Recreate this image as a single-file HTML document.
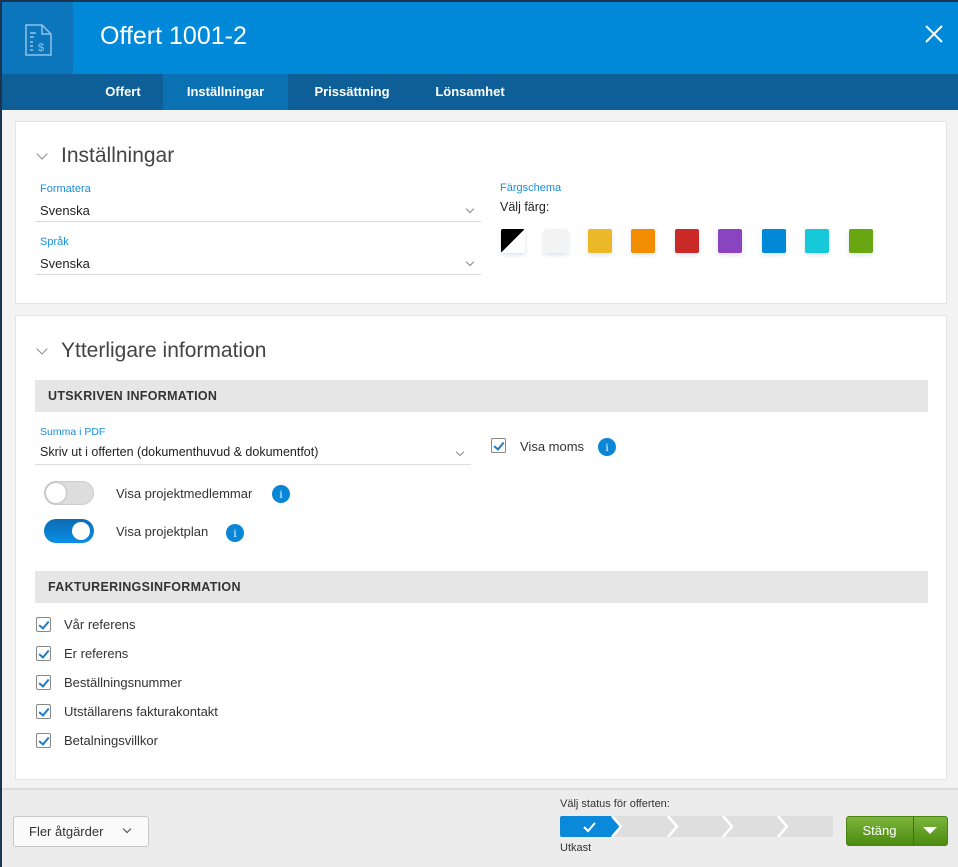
<!DOCTYPE html>
<html><head><meta charset="utf-8"><style>
*{box-sizing:border-box;margin:0;padding:0}
body{width:958px;height:867px;overflow:hidden;font-family:"Liberation Sans",sans-serif;background:#1a3550;position:relative;color:#333}
.m{position:absolute;left:2px;top:2px;right:0;bottom:0;background:#f3f3f3}
.hd{position:absolute;left:0;top:0;right:0;height:72px;background:#0089d9}
.ic{position:absolute;left:0;top:0;width:71px;height:72px;background:#0b76bb}
.tt{position:absolute;left:98px;top:20px;color:#fff;font-size:25px}
.x{position:absolute;right:14px;top:22px}
.tb{position:absolute;left:0;top:72px;right:0;height:36px;background:#0e5f98}
.tb span{position:absolute;top:0;height:36px;line-height:36px;color:#fff;font-size:13px;font-weight:bold;text-align:center}
.card{position:absolute;left:13px;right:11px;background:#fff;border:1px solid #e4e4e4}
.h2{position:absolute;font-size:21px;color:#444}
.chev{position:absolute;width:8px;height:8px;border-right:1.3px solid #888;border-bottom:1.3px solid #888;transform:rotate(45deg)}
.lbl{position:absolute;font-size:11px;color:#1a8fd8}
.val{position:absolute;font-size:13px;color:#222}
.ln{position:absolute;height:1px;background:#ddd}
.sw{position:absolute;top:227px;width:24px;height:24px;border-radius:2px;box-shadow:0 2px 5px rgba(0,60,140,.15)}
.bar{position:absolute;left:33px;width:893px;height:32px;background:#e6e6e6;font-size:12.5px;font-weight:bold;color:#333;line-height:32px;padding-left:13px;letter-spacing:.3px}
.cb{position:absolute;width:15px;height:15px;border:1px solid #888;border-radius:2px;background:#fff}
.cb::after{content:"";position:absolute;left:4px;top:1px;width:4px;height:8px;border-right:2px solid #1a7cc8;border-bottom:2px solid #1a7cc8;transform:rotate(40deg)}
.t{position:absolute;font-size:13px;color:#333}
.i{position:absolute;width:18px;height:18px;border-radius:50%;background:#0a86d6;color:#fff;font-size:12px;text-align:center;line-height:18px;font-family:"Liberation Serif",serif}
.tg{position:absolute;width:50px;height:24px;border-radius:12px}
.ft{position:absolute;left:0;right:0;top:786px;bottom:0;background:#ececec;border-top:2px solid #ddd}
</style></head><body>
<div class="m">
<div class="hd">
 <div class="ic"><svg width="71" height="72"><g fill="none" stroke="#8fc3e6" stroke-width="1.5"><path d="M24 23h16l9 9v21H24z M40 23v9h9"/><path d="M28 31h6M28 35h4M28 40h3M28 44h3M28 48h3"/></g><text x="36" y="49" fill="#8fc3e6" font-size="11" font-family="Liberation Sans">$</text></svg></div>
 <div class="tt">Offert 1001-2</div>
 <svg class="x" width="20" height="20"><path d="M2 2L18 18M18 2L2 18" stroke="#fff" stroke-width="2"/></svg>
</div>
<div class="tb">
 <span style="left:80px;width:82px">Offert</span>
 <span style="left:161px;width:125px;background:#0a71b2">Inställningar</span>
 <span style="left:287px;width:126px">Prissättning</span>
 <span style="left:413px;width:110px">Lönsamhet</span>
</div>

<div class="card" style="top:119px;height:183px"></div>
<div class="chev" style="left:36px;top:148px"></div>
<div class="h2" style="left:59px;top:142px">Inställningar</div>
<div class="lbl" style="left:38px;top:181px">Formatera</div>
<div class="val" style="left:38px;top:201px">Svenska</div>
<div class="chev" style="left:465px;top:204px;width:6px;height:6px"></div>
<div class="ln" style="left:33px;top:219px;width:446px"></div>
<div class="lbl" style="left:38px;top:234px">Språk</div>
<div class="val" style="left:38px;top:254px">Svenska</div>
<div class="chev" style="left:465px;top:257px;width:6px;height:6px"></div>
<div class="ln" style="left:33px;top:272px;width:446px"></div>
<div class="lbl" style="left:498px;top:180px">Färgschema</div>
<div class="val" style="left:498px;top:198px;font-size:12.5px">Välj färg:</div>
<div class="sw" style="left:499px;background:linear-gradient(135deg,#000 50%,#fff 50%)"></div>
<div class="sw" style="left:542px;background:#f4f4f4"></div>
<div class="sw" style="left:586px;background:#ebb827"></div>
<div class="sw" style="left:629px;background:#f28c00"></div>
<div class="sw" style="left:673px;background:#c92a28"></div>
<div class="sw" style="left:716px;background:#8a44c0"></div>
<div class="sw" style="left:760px;background:#0088d8"></div>
<div class="sw" style="left:803px;background:#16c8d8"></div>
<div class="sw" style="left:847px;background:#68a712"></div>

<div class="card" style="top:313px;height:465px"></div>
<div class="chev" style="left:36px;top:343px"></div>
<div class="h2" style="left:59px;top:337px">Ytterligare information</div>
<div class="bar" style="top:378px">UTSKRIVEN INFORMATION</div>
<div class="lbl" style="left:38px;top:424px;font-size:10.5px">Summa i PDF</div>
<div class="val" style="left:38px;top:443px;font-size:12.5px">Skriv ut i offerten (dokumenthuvud &amp; dokumentfot)</div>
<div class="chev" style="left:455px;top:447px;width:6px;height:6px"></div>
<div class="ln" style="left:33px;top:462px;width:436px"></div>
<div class="cb" style="left:489px;top:436px"></div>
<div class="t" style="left:518px;top:437px">Visa moms</div>
<div class="i" style="left:596px;top:436px">i</div>
<div class="tg" style="left:42px;top:479px;background:#ddd;border:1px solid #ccc"><div style="position:absolute;left:1px;top:1px;width:20px;height:20px;border-radius:50%;background:#fff;box-shadow:0 0 2px rgba(0,0,0,.3)"></div></div>
<div class="t" style="left:114px;top:484px">Visa projektmedlemmar</div>
<div class="i" style="left:270px;top:483px">i</div>
<div class="tg" style="left:42px;top:517px;background:linear-gradient(#0c6cb4,#0a8ee6)"><div style="position:absolute;left:28px;top:3px;width:18px;height:18px;border-radius:50%;background:#fff"></div></div>
<div class="t" style="left:114px;top:522px">Visa projektplan</div>
<div class="i" style="left:224px;top:522px">i</div>
<div class="bar" style="top:569px">FAKTURERINGSINFORMATION</div>
<div class="cb" style="left:34px;top:615px"></div><div class="t" style="left:62px;top:615px">Vår referens</div>
<div class="cb" style="left:34px;top:644px"></div><div class="t" style="left:62px;top:644px">Er referens</div>
<div class="cb" style="left:34px;top:673px"></div><div class="t" style="left:62px;top:673px">Beställningsnummer</div>
<div class="cb" style="left:34px;top:702px"></div><div class="t" style="left:62px;top:702px">Utställarens fakturakontakt</div>
<div class="cb" style="left:34px;top:731px"></div><div class="t" style="left:62px;top:731px">Betalningsvillkor</div>

<div class="ft">
 <div style="position:absolute;left:11px;top:26px;width:136px;height:31px;background:#fafafa;border:1px solid #c8c8c8;border-radius:3px;font-size:13px;line-height:29px;padding-left:15px;color:#333">Fler åtgärder</div>
 <div class="chev" style="left:122px;top:36px;width:6px;height:6px;border-color:#444"></div>
 <div class="t" style="left:558px;top:8px;font-size:11px">Välj status för offerten:</div>
 <svg style="position:absolute;left:558px;top:26px" width="273" height="21"><rect width="273" height="21" rx="2" fill="#dedede"/><path d="M0 2Q0 0 2 0H52L61 10.5L52 21H2Q0 21 0 19z" fill="#0a89da"/><path d="M52 0L61 10.5L52 21M108 0L117 10.5L108 21M163 0L172 10.5L163 21M218 0L227 10.5L218 21" fill="none" stroke="#fff" stroke-width="2.5"/><path d="M24 11l4 4 7-8" fill="none" stroke="#fff" stroke-width="2"/></svg>
 <div class="t" style="left:558px;top:52px;font-size:11px">Utkast</div>
 <div style="position:absolute;left:844px;top:26px;width:102px;height:30px;border-radius:3px;background:linear-gradient(#7cb53b,#4c8a10);border:1px solid #4a8412"></div>
 <div style="position:absolute;left:911px;top:27px;width:1px;height:28px;background:#3e7410"></div>
 <div style="position:absolute;left:844px;top:26px;width:67px;height:30px;color:#fff;font-size:13px;line-height:30px;text-align:center">Stäng</div>
 <svg style="position:absolute;left:921px;top:37px" width="14" height="8"><path d="M0 0H14L7 7z" fill="#fff"/></svg>
</div>
</div>
</body></html>
